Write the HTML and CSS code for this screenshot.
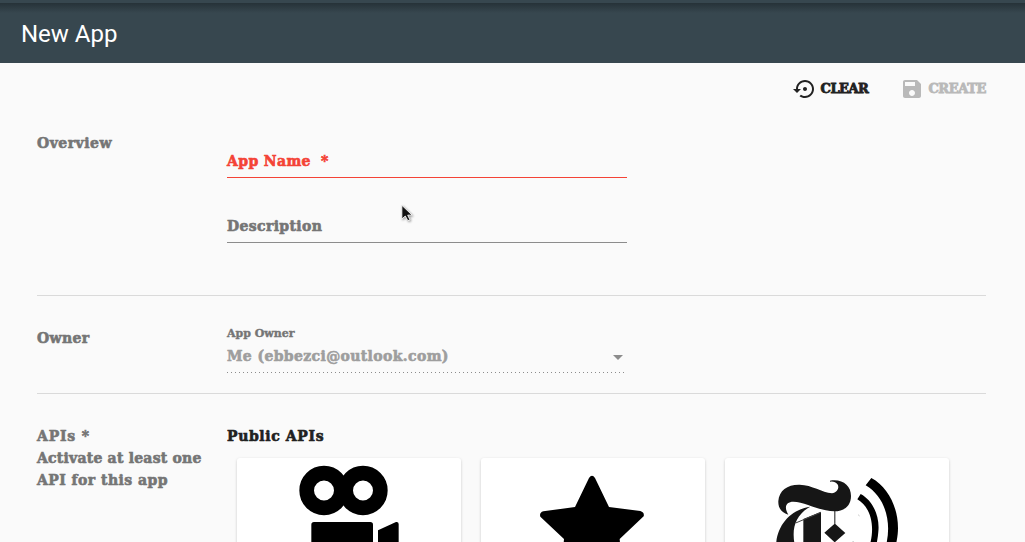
FILE: index.html
```html
<!DOCTYPE html>
<html lang="en">
<head>
<meta charset="utf-8">
<title>New App</title>
<link rel="stylesheet" href="styles.css">
</head>
<body>
<header class="toolbar"><h1 class="title">New App</h1></header>
<main class="content">
  <div class="actions">
    <button class="action"><svg class="icon" viewBox="0 0 24 24"><path d="M14 12c0-1.100-.9-2-2-2s-2 .9-2 2 .9 2 2 2 2-.9 2-2zm-2-9c-4.970 0-9 4.030-9 9H0l4 4 4-4H5c0-3.870 3.130-7 7-7s7 3.130 7 7-3.130 7-7 7c-1.510 0-2.910-.49-4.060-1.300l-1.420 1.440C8.040 20.300 9.940 21 12 21c4.970 0 9-4.030 9-9s-4.030-9-9-9z"/></svg><span class="clear-text">CLEAR</span></button>
    <button class="action disabled" disabled><svg class="icon" viewBox="0 0 24 24"><path d="M17 3H5c-1.110 0-2 .9-2 2v14c0 1.100.89 2 2 2h14c1.100 0 2-.9 2-2V7l-4-4zm-5 16c-1.660 0-3-1.340-3-3s1.340-3 3-3 3 1.340 3 3-1.340 3-3 3zm3-10H5V5h10v4z"/></svg><span class="create-text">CREATE</span></button>
  </div>
  <section class="section overview">
    <h2 class="section-label"><span class="t-overview">Overview</span></h2>
    <div class="fields">
      <label class="field required"><span class="t-name">App Name</span><span class="star">*</span></label>
      <label class="field"><span class="t-desc">Description</span></label>
    </div>
  </section>
  <section class="section owner">
    <h2 class="section-label"><span class="t-owner">Owner</span></h2>
    <div class="select">
      <span class="select-label">App Owner</span>
      <div class="select-value"><span class="t-me">Me (ebbezci@outlook.com)</span><i class="caret"></i></div>
    </div>
  </section>
  <section class="section apis">
    <h2 class="section-label"><span class="t-apis">APIs *</span><br><span class="t-activate">Activate at least one</span><br><span class="t-for">API for this app</span></h2>
    <div class="public">
      <h3 class="public-title">Public APIs</h3>
      <div class="cards">
        <div class="card"><svg class="art" viewBox="21 24 672 252"><circle cx="282" cy="121.500" r="52" class="ring"/><circle cx="399" cy="121.500" r="52" class="ring"/><path d="M244 290V224q0-8 8-8H421q8 0 8 8V290zM444 290V241L498 216Q506 215 506 222V290z"/></svg></div>
        <div class="card"><svg class="art" viewBox="18 24 672 252"><path d="M342 84Q351 71 360 84L402 171L496 183Q509 187 506 199L434 267L436 290H265L267 267L196 200Q192 188 205 184L300 171Z"/></svg></div>
        <div class="card"><svg class="art" viewBox="15 24 672 252">
          <path class="ink" d="M330 92C368 86 393 107 393 138C393 169 371 184 343 184C301 184 256 156 220 155C198 155 191 171 205 194C184 188 174 173 175 153C177 121 203 103 239 104C277 105 305 127 336 130C356 127 362 105 345 97Q338 93 330 95Z"/>
          <path class="ink" d="M168 290C169 229 209 179 271 170C234 190 220 222 221 256Q221 273 226 290ZM250 290V207L303 185V290ZM343 183H346V222L376 249L344 277L313 248L343 222Z"/>
          <path class="hair" d="M227 219L303 187"/>
          <path d="M412 148L422 132C458 151 480 198 475 245Q474 262 468 290H448C464 238 459 177 412 148ZM437 106L454 84C509 113 540 185 533 253Q531 272 526 290H497C516 222 499 143 437 106Z"/>
          <path class="speck" d="M414 194L419 198M397 275H402"/>
        </svg></div>
      </div>
    </div>
  </section>
</main>
<svg class="cursor" viewBox="0 0 14 20"><path d="M1 1V17L5 13.500L8 19L10.500 18L7.800 12.500H13Z"/></svg>
</body>
</html>
```
FILE: styles.css
```css
* { box-sizing: border-box; }
body { margin: 0; width: 1025px; height: 542px; overflow: hidden; position: relative; background: #fafafa; color: #212121; font-family: "DejaVu Serif", serif; font-weight: 700; }
h1, h2, h3 { margin: 0; font-size: inherit; }
.toolbar { height: 63px; padding: 2px 21px 0; display: flex; align-items: center; border-top: 3px solid #37474f; background: linear-gradient(#263238, #37474f 10px); }
.title { font: 400 24px/32px Roboto, sans-serif; color: #fff; }
.content { height: 479px; padding: 0 39px 0 37px; overflow: hidden; }
.actions { height: 56px; padding-top: 14px; display: flex; justify-content: flex-end; align-items: flex-start; gap: 32px; }
.action { display: flex; align-items: center; gap: 4px; height: 24px; padding: 0; border: 0; background: none; color: #212121; font: inherit; font-size: 13px; line-height: 24px; -webkit-text-stroke: .8px; }
.action.disabled { color: #b9b9b9; }
.clear-text { letter-spacing: -.5px; }
.create-text { letter-spacing: -.4px; }
.icon { width: 24px; height: 24px; fill: currentColor; flex: none; }
.section { display: flex; border-bottom: 1px solid #dadada; }
.section-label { width: 190px; flex: none; font-size: 14px; line-height: 22px; color: #757575; }
.section span, .public-title { white-space: pre; -webkit-text-stroke: .6px; }
.overview { height: 177px; padding-top: 13px; }
.fields { width: 400px; padding-top: 15px; display: flex; flex-direction: column; gap: 34px; }
.field { height: 31px; border-bottom: 1px solid #8c8c8c; color: #757575; font-size: 14px; line-height: 29px; }
.required { color: #f44336; border-color: #f44336; }
.star { margin-left: 10px; }
.t-overview { letter-spacing: .5px; }
.t-name, .t-desc, .t-owner { letter-spacing: .37px; }
.t-me { letter-spacing: .37px; }
.t-apis { letter-spacing: .8px; }
.t-activate { letter-spacing: .22px; }
.t-for { letter-spacing: .45px; }
.owner { height: 98px; padding-top: 31px; }
.select { width: 397px; font-size: 14px; color: #9e9e9e; }
.section .select-label { display: block; font-size: 11px; line-height: 14px; color: #757575; -webkit-text-stroke: .4px; }
.select-value { display: flex; height: 32px; line-height: 31px; justify-content: space-between; background: repeating-linear-gradient(90deg, #8c8c8c 0 1px, transparent 1px 4px) bottom / 100% 1px no-repeat; }
.caret { width: 10px; height: 5px; margin: 14px 1px 0 0; background: #8c8c8c; clip-path: polygon(0 0, 100% 0, 50% 100%); }
.apis { padding-top: 31px; border: 0; }
.public-title { font-size: 14px; line-height: 22px; letter-spacing: .62px; }
.cards { display: flex; gap: 20px; padding: 11px 0 0 10px; }
.card { width: 224px; height: 120px; flex: none; border-radius: 3px; background: #fff; box-shadow: 0 1px 3px #0003; overflow: hidden; }
.art { display: block; width: 224px; height: 84px; }
.ring { fill: none; stroke: #000; stroke-width: 44px; }
.ink { fill: #161616; }
.hair { stroke: #444; stroke-width: 3px; }
.speck { stroke: #ccc; stroke-width: 3px; }
.cursor { position: absolute; left: 401px; top: 203px; width: 12px; height: 20px; fill: #111; stroke: #fff; stroke-width: 1px; filter: drop-shadow(1px 1px 1px #0006); }
```
